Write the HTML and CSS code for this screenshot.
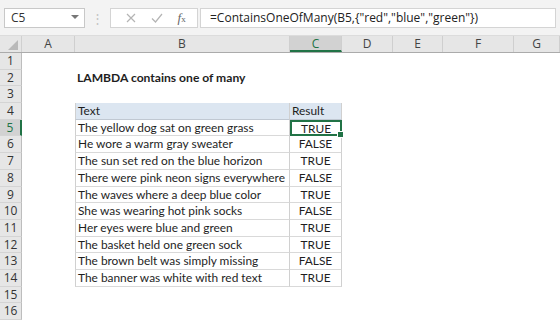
FILE: index.html
```html
<!DOCTYPE html>
<html lang="en">
<head>
    <meta charset="UTF-8">
    <title>LAMBDA contains one of many</title>
    <link rel="stylesheet" href="styles.css">
</head>
<body>
    <!-- Formula bar -->
    <div class="toolbar">
        <div class="namebox">
            <span>C5</span>
            <svg class="caret" width="8" height="5" viewBox="0 0 8 5"><path d="M0 0h8L4 4z" fill="#777"/></svg>
        </div>
        <div class="grip">&#8942;</div>
        <div class="fxbox">
            <svg width="10" height="10" viewBox="0 0 10 10"><path d="M1 1l8 8M9 1l-8 8" stroke="#b4b4b4" stroke-width="1.2"/></svg>
            <svg width="12" height="10" viewBox="0 0 12 10"><path d="M1 5.5l3.5 3.5L11 1" stroke="#b4b4b4" stroke-width="1.2" fill="none"/></svg>
            <span class="fx"><i>f</i><small>x</small></span>
        </div>
        <div class="formula">=ContainsOneOfMany(B5,{"red","blue","green"})</div>
    </div>

    <!-- Column headers -->
    <div class="colhead">
        <div class="corner"><svg width="10" height="10" viewBox="0 0 10 10"><path d="M10 0v10H0z" fill="#b9b9b9"/></svg></div>
        <div class="ch a">A</div>
        <div class="ch b">B</div>
        <div class="ch c active">C</div>
        <div class="ch d">D</div>
        <div class="ch e">E</div>
        <div class="ch f">F</div>
        <div class="ch g">G</div>
    </div>

    <!-- Sheet -->
    <div class="sheet">
        <div class="row"><div class="rn">1</div></div>
        <div class="row"><div class="rn">2</div><div class="a"></div><div class="b title">LAMBDA contains one of many</div></div>
        <div class="row"><div class="rn">3</div></div>
        <div class="row tbl head"><div class="rn">4</div><div class="a"></div><div class="b">Text</div><div class="c">Result</div></div>
        <div class="row tbl"><div class="rn active">5</div><div class="a"></div><div class="b">The yellow dog sat on green grass</div><div class="c val selected">TRUE</div></div>
        <div class="row tbl"><div class="rn">6</div><div class="a"></div><div class="b">He wore a warm gray sweater</div><div class="c val">FALSE</div></div>
        <div class="row tbl"><div class="rn">7</div><div class="a"></div><div class="b">The sun set red on the blue horizon</div><div class="c val">TRUE</div></div>
        <div class="row tbl"><div class="rn">8</div><div class="a"></div><div class="b">There were pink neon signs everywhere</div><div class="c val">FALSE</div></div>
        <div class="row tbl"><div class="rn">9</div><div class="a"></div><div class="b">The waves where a deep blue color</div><div class="c val">TRUE</div></div>
        <div class="row tbl"><div class="rn">10</div><div class="a"></div><div class="b">She was wearing hot pink socks</div><div class="c val">FALSE</div></div>
        <div class="row tbl"><div class="rn">11</div><div class="a"></div><div class="b">Her eyes were blue and green</div><div class="c val">TRUE</div></div>
        <div class="row tbl"><div class="rn">12</div><div class="a"></div><div class="b">The basket held one green sock</div><div class="c val">TRUE</div></div>
        <div class="row tbl"><div class="rn">13</div><div class="a"></div><div class="b">The brown belt was simply missing</div><div class="c val">FALSE</div></div>
        <div class="row tbl last"><div class="rn">14</div><div class="a"></div><div class="b">The banner was white with red text</div><div class="c val">TRUE</div></div>
        <div class="row"><div class="rn">15</div></div>
        <div class="row"><div class="rn">16</div></div>
    </div>
</body>
</html>
```

FILE: styles.css
```css
body {
    margin: 0;
    width: 560px;
    height: 320px;
    overflow: hidden;
    background: #fff;
    font-family: Lato, "Open Sans", sans-serif;
    color: #1e1e1e;
}

/* formula bar */
.toolbar {
    display: flex;
    align-items: center;
    height: 36px;
    padding: 0 4px;
    box-sizing: border-box;
    background: #f3f3f3;
    border-bottom: 1px solid #dcdcdc;
    font-family: "Open Sans", sans-serif;
    font-size: 12px;
}
.namebox {
    display: flex;
    align-items: center;
    justify-content: space-between;
    width: 81px;
    height: 20px;
    padding: 0 5px 0 6px;
    box-sizing: border-box;
    background: #fff;
    border: 1px solid #c8c8c8;
    color: #333;
}
.grip {
    width: 25px;
    text-align: center;
    color: #c4c4c4;
    font-size: 13px;
}
.fxbox {
    display: flex;
    align-items: center;
    justify-content: space-around;
    width: 88px;
    height: 20px;
    padding: 0 4px 0 8px;
    box-sizing: border-box;
    background: #fff;
    border: 1px solid #d4d4d4;
}
.fx {
    font-family: "Liberation Serif", serif;
    font-size: 13px;
    color: #666;
}
.fx small {
    font-size: 9px;
}
.formula {
    flex: 1;
    height: 20px;
    margin-left: 2px;
    padding-left: 9px;
    box-sizing: border-box;
    background: #fff;
    border: 1px solid #d4d4d4;
    line-height: 18px;
    color: #222;
    white-space: nowrap;
}

/* column headers */
.colhead {
    display: flex;
    height: 17px;
    box-sizing: border-box;
    background: #e6e6e6;
    border-bottom: 1px solid #ababab;
    font-family: "Open Sans", sans-serif;
    font-size: 12px;
    line-height: 16px;
    color: #444;
}
.corner {
    width: 22px;
    display: flex;
    align-items: flex-end;
    justify-content: flex-end;
    padding: 0 3px 2px 0;
    box-sizing: border-box;
    border-right: 1px solid #d0d0d0;
}
.ch {
    text-align: center;
    box-sizing: border-box;
    border-right: 1px solid #cfcfcf;
}
.ch.active {
    background: #d2d2d2;
    border-bottom: 2px solid #217346;
    color: #217346;
}
.a { width: 53px; }
.b { width: 215px; }
.c { width: 52px; }
.d { width: 51px; }
.e { width: 50px; }
.f { width: 71px; }
.g { width: 46px; }

/* sheet rows */
.row {
    display: flex;
    height: 16.7px;
    font-size: 11.9px;
    line-height: 16.5px;
}
.rn {
    width: 22px;
    box-sizing: border-box;
    background: #e6e6e6;
    border-right: 1px solid #bdbdbd;
    border-bottom: 1px solid #d4d4d4;
    text-align: center;
    font-family: "Open Sans", sans-serif;
    font-size: 12px;
    line-height: 16px;
    color: #333;
}
.rn.active {
    background: #d2d2d2;
    border-right: 2px solid #217346;
    color: #217346;
}
.title {
    padding-left: 2px;
    font-weight: bold;
    font-size: 12.1px;
}
.tbl .b,
.tbl .c {
    box-sizing: border-box;
    border-bottom: 1px solid #d9d9d9;
    white-space: nowrap;
}
.tbl .b {
    padding-left: 2px;
    border-left: 1px solid #d0d0d0;
    border-right: 1px solid #d0d0d0;
}
.tbl .c {
    border-right: 1px solid #d0d0d0;
}
.head .b,
.head .c {
    background: #dce6f1;
    border-bottom-color: #c0c8d2;
}
.head .c {
    padding-left: 2px;
}
.val {
    text-align: center;
}
.selected {
    position: relative;
    border: 2px solid #217346 !important;
    line-height: 13px;
}
.selected::after {
    content: "";
    position: absolute;
    right: -4px;
    bottom: -4px;
    width: 5px;
    height: 5px;
    background: #217346;
    border: 1px solid #fff;
}
```
